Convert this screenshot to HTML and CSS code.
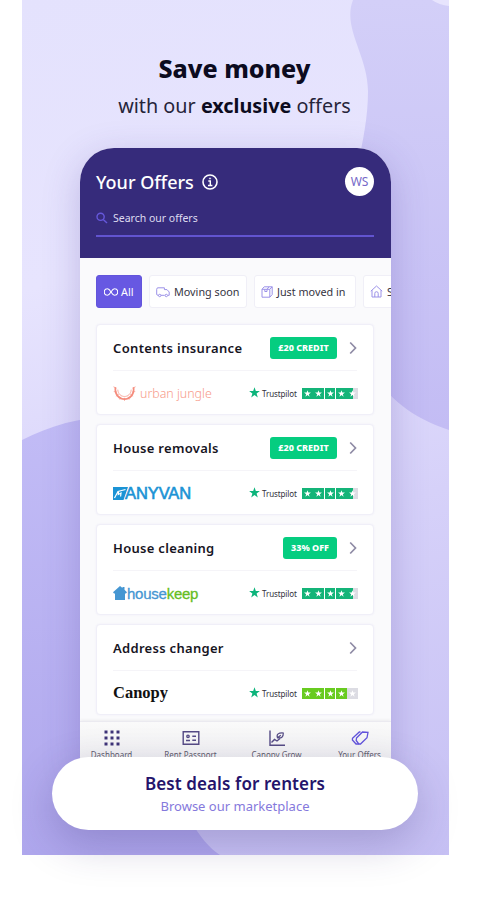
FILE: index.html
```html
<!DOCTYPE html>
<html lang="en">
  <head>
    <meta charset="UTF-8" />
    <meta name="viewport" content="width=device-width, initial-scale=1.0" />
    <title>Your Offers</title>
    <link rel="stylesheet" href="styles.css">
  </head>
  <body>
    <svg class="sprite" width="0" height="0">
      <symbol id="star" viewBox="0 0 10 10">
        <path d="M5 .2 6.2 3.7H9.9L6.9 5.9 8 9.5 5 7.3 2 9.5 3.1 5.9.1 3.7H3.8Z" />
      </symbol>
      <symbol id="arrow" viewBox="0 0 8 14">
        <path d="M1.2 1.5 6.5 7 1.2 12.5" fill="none" stroke="#8f8ba5" stroke-width="1.7" />
      </symbol>
    </svg>

    <div class="poster">
      <svg class="backdrop" viewBox="0 0 427 855">
        <defs>
          <linearGradient id="lilac" x1="0" y1="0" x2="0" y2="1">
            <stop offset="0" stop-color="#d3cff8" />
            <stop offset="1" stop-color="#c3bcf4" />
          </linearGradient>
          <linearGradient id="violet" x1="0" y1="0" x2="0" y2="1">
            <stop offset="0" stop-color="#c2bcf6" />
            <stop offset="1" stop-color="#afa7ed" />
          </linearGradient>
        </defs>
        <path d="M331 0C320 28 346 55 346 91C346 145 325 185 326 250C328 350 352 405 427 430V0Z" fill="url(#lilac)" />
        <path d="M410 0Q417 5 427 6V0Z" fill="#e7e4fd" />
        <path d="M0 440C70 404 170 400 190 500C210 610 140 680 150 760C155 806 178 842 198 855H0Z" fill="url(#violet)" />
      </svg>

      <div class="heading">
        <h1>Save money</h1>
        <p>with our <b>exclusive</b> offers</p>
      </div>

      <div class="phone">
        <div class="header">
          <div class="title-row">
            <h2>Your Offers</h2>
            <svg class="info" viewBox="0 0 16 16" fill="none" stroke="#fff">
              <circle cx="8" cy="8" r="7" stroke-width="1.6" />
              <path d="M6.3 7H8.3V11.5M6 11.5H10.4" stroke-width="1.4" />
              <circle cx="8" cy="4.5" r=".6" />
            </svg>
            <span class="avatar">WS</span>
          </div>
          <div class="search">
            <svg viewBox="0 0 12 12" width="12" height="12" fill="none" stroke="#6658dc" stroke-width="1.4">
              <circle cx="4.6" cy="4.8" r="3.6" />
              <path d="M7.2 7.4 11 11" />
            </svg>
            <span>Search our offers</span>
          </div>
        </div>

        <div class="chips">
          <div class="chip active">
            <svg viewBox="0 0 14 8" width="14" height="8" fill="none" stroke="#fff" stroke-width="1.1">
              <path d="M7 4C5.5 1.6 4.6.8 3.5.8a3 3 0 0 0 0 6.4C4.8 7.2 5.8 5.9 7 4S9.2.8 10.5.8a3 3 0 0 1 0 6.4C9.4 7.2 8.5 6.4 7 4Z" />
            </svg>
            <span>All</span>
          </div>
          <div class="chip soon">
            <svg viewBox="0 0 14 12" width="14" height="12" fill="none" stroke="#9c92e8">
              <path d="M2.5 9.3H1.8Q.7 9.3.7 8V3.3Q.7 1.8 2 1.8H8.4V3.6H11L13.2 6V9.3H12M5 9.3H8.6" />
              <circle cx="3.7" cy="9.5" r="1.2" />
              <circle cx="10.3" cy="9.5" r="1.2" />
            </svg>
            <span>Moving soon</span>
          </div>
          <div class="chip moved">
            <svg viewBox="0 0 12 12" width="12" height="12" fill="none" stroke="#9c92e8">
              <path d="M1 3.3H8.8V11.2H1ZM1 3.3 3.2 .8H11.2L8.8 3.3M11.2 .8V8.5L8.8 11.2M3.8 3.3V5.5H6V3.3L8 .8" />
            </svg>
            <span>Just moved in</span>
          </div>
          <div class="chip settled">
            <svg viewBox="0 0 13 13" width="13" height="13" fill="none" stroke="#9c92e8">
              <path d="M.8 6.2 6.5 1 12.2 6.2M2 5.2V12H11V5.2M4.8 12V8.4A1.7 1.7 0 0 1 8.2 8.4V12" />
            </svg>
            <span>S</span>
          </div>
        </div>

        <div class="offers">
          <div class="card">
            <div class="card-top">
              <h3 class="contents">Contents insurance</h3>
              <span class="badge">£20 CREDIT</span>
              <svg class="arrow"><use href="#arrow" /></svg>
            </div>
            <div class="card-bottom">
              <div class="brand jungle">
                <svg viewBox="0 0 24 18" width="23" height="18" fill="none" stroke="#f58c7d">
                  <path d="M2.5 3C1 19.5 23 19.5 21.5 3" stroke-width="1.8" />
                  <path d="M5 5.5C5.5 15 18.5 15 19 5.5" stroke-width=".7" />
                  <path d="M.5 2.5 3.5 4M.8 7.5 4 8M3 12.3 6 10.5M7 15.8 8.5 13M12 17.2V14M17 15.8 15.5 13M21 12.3 18 10.5M23.2 7.5 20 8M23.5 2.5 20.5 4" stroke-width=".7" />
                </svg>
                <span>urban jungle</span>
              </div>
              <div class="trust">
                <svg class="logo-star"><use href="#star" /></svg>
                <span>Trustpilot</span>
                <div class="stars">
                  <i><svg><use href="#star" /></svg></i>
                  <i><svg><use href="#star" /></svg></i>
                  <i><svg><use href="#star" /></svg></i>
                  <i><svg><use href="#star" /></svg></i>
                  <i class="half"><svg><use href="#star" /></svg></i>
                </div>
              </div>
            </div>
          </div>

          <div class="card">
            <div class="card-top">
              <h3>House removals</h3>
              <span class="badge">£20 CREDIT</span>
              <svg class="arrow"><use href="#arrow" /></svg>
            </div>
            <div class="card-bottom">
              <div class="brand anyvan">
                <svg viewBox="0 0 15 13" width="15" height="13">
                  <path d="M0 0H15L10.5 13H0Z" fill="#1b93d5" />
                  <path d="M1.5 11 5 4.5 12.5 2.5M5.5 4.5 5.3 7.5 8 6 7.6 9.5" fill="none" stroke="#fff" stroke-width="1.2" />
                </svg>
                <span>ANYVAN</span>
              </div>
              <div class="trust">
                <svg class="logo-star"><use href="#star" /></svg>
                <span>Trustpilot</span>
                <div class="stars">
                  <i><svg><use href="#star" /></svg></i>
                  <i><svg><use href="#star" /></svg></i>
                  <i><svg><use href="#star" /></svg></i>
                  <i><svg><use href="#star" /></svg></i>
                  <i class="half"><svg><use href="#star" /></svg></i>
                </div>
              </div>
            </div>
          </div>

          <div class="card">
            <div class="card-top">
              <h3>House cleaning</h3>
              <span class="badge off">33% OFF</span>
              <svg class="arrow"><use href="#arrow" /></svg>
            </div>
            <div class="card-bottom">
              <div class="brand housekeep">
                <svg viewBox="0 0 14 14" width="14" height="14" fill="#4596d2">
                  <path d="M7 0 9.5 2V1H11.5V3.8L14 6.2 13 7.5H12V14H2V7.5H1L0 6.2Z" />
                </svg>
                <span>house<em>keep</em></span>
              </div>
              <div class="trust">
                <svg class="logo-star"><use href="#star" /></svg>
                <span>Trustpilot</span>
                <div class="stars">
                  <i><svg><use href="#star" /></svg></i>
                  <i><svg><use href="#star" /></svg></i>
                  <i><svg><use href="#star" /></svg></i>
                  <i><svg><use href="#star" /></svg></i>
                  <i class="half"><svg><use href="#star" /></svg></i>
                </div>
              </div>
            </div>
          </div>

          <div class="card">
            <div class="card-top">
              <h3>Address changer</h3>
              <svg class="arrow"><use href="#arrow" /></svg>
            </div>
            <div class="card-bottom">
              <div class="brand canopy"><span>Canopy</span></div>
              <div class="trust four">
                <svg class="logo-star"><use href="#star" /></svg>
                <span>Trustpilot</span>
                <div class="stars">
                  <i><svg><use href="#star" /></svg></i>
                  <i><svg><use href="#star" /></svg></i>
                  <i><svg><use href="#star" /></svg></i>
                  <i><svg><use href="#star" /></svg></i>
                  <i class="empty"><svg><use href="#star" /></svg></i>
                </div>
              </div>
            </div>
          </div>
        </div>

        <div class="tabs">
          <div class="tab">
            <svg viewBox="0 0 18 18" width="18" height="18" fill="#3e3478">
              <path d="M1.5 1.5h3v3h-3ZM7.5 1.5h3v3h-3ZM13.5 1.5h3v3h-3ZM1.5 7.5h3v3h-3ZM7.5 7.5h3v3h-3ZM13.5 7.5h3v3h-3ZM1.5 13.5h3v3h-3ZM7.5 13.5h3v3h-3ZM13.5 13.5h3v3h-3Z" />
            </svg>
            <span>Dashboard</span>
          </div>
          <div class="tab passport">
            <svg viewBox="0 0 18 18" width="18" height="18" fill="none" stroke="#554b85" stroke-width="1.4">
              <path d="M1.2 2.7H16.8V15.3H1.2Z" />
              <path d="M4 11.5H8M10.3 7.2H14M10.3 11.2H14" />
              <circle cx="6" cy="7.3" r="1.2" />
            </svg>
            <span>Rent Passport</span>
          </div>
          <div class="tab grow">
            <svg viewBox="0 0 18 18" width="18" height="18" fill="none" stroke="#554b85" stroke-width="1.4">
              <path d="M2 1.5V16.3H17M3.5 13.5 6.5 10.5 9 12 12 9.5" />
              <path d="M9.5 8.8C8.2 5 10.5 3.7 15.3 4C15.5 8 13.3 9.5 9.5 8.8ZM9.5 8.8 12.8 6.2" stroke-width="1.2" />
            </svg>
            <span>Canopy Grow</span>
          </div>
          <div class="tab current">
            <svg viewBox="0 0 18 18" width="18" height="18" fill="none" stroke="#6254dc" stroke-width="1.3">
              <path d="M5.5 9 11.5 3 17 3.3 16 8.8 9.5 15 7.8 15 5.2 11.5Z" />
              <path d="M9.5 3H8.3L1.5 9.3 1.4 11 5 15H7.8" />
            </svg>
            <span>Your Offers</span>
          </div>
        </div>
      </div>

      <div class="cta">
        <strong>Best deals for renters</strong>
        <span>Browse our marketplace</span>
      </div>
    </div>
  </body>
</html>
```

FILE: styles.css
```css
* {
  box-sizing: border-box;
}
body {
  margin: 0;
  height: 900px;
  overflow: hidden;
  background-color: white;
  font-family: "Noto Sans", sans-serif;
}
h1, h2, h3, p {
  margin: 0;
}
svg {
  display: block;
  flex-shrink: 0;
}
.sprite {
  position: absolute;
}
.poster {
  position: relative;
  display: flex;
  flex-direction: column;
  width: 427px;
  height: 855px;
  margin-left: 22px;
  background: linear-gradient(165deg, #e4e2fd 0%, #e7e4fe 30%, #d6d1f9 62%, #c6c0f4 100%);
}
.backdrop {
  position: absolute;
  top: 0;
  left: 0;
  width: 427px;
  height: 855px;
}

.heading {
  position: relative;
  height: 148px;
  padding: 50px 2px 0 0;
  text-align: center;
  color: #0c0b20;
}
.heading h1 {
  font-size: 25px;
  line-height: 36px;
  font-weight: 800;
  white-space: nowrap;
}
.heading p {
  margin-top: 6px;
  font-size: 19.8px;
  line-height: 28px;
  color: #26243a;
  white-space: nowrap;
}
.heading b {
  font-weight: 700;
  color: #0c0b20;
}

.phone {
  position: relative;
  width: 311px;
  height: 622px;
  margin-left: 58px;
  border-radius: 34px 34px 0 0;
  background-color: #fafafc;
  overflow: hidden;
  box-shadow: 0 10px 36px rgba(70, 55, 150, 0.25);
}
.header {
  height: 110px;
  padding: 18px 17px 0 16px;
  background-color: #362b7b;
  color: white;
}
.title-row {
  display: flex;
  align-items: center;
  height: 31px;
}
.title-row h2 {
  font-size: 18px;
  font-weight: 500;
  white-space: nowrap;
}
.info {
  width: 16px;
  height: 16px;
  margin-left: 8px;
}
.avatar {
  width: 29px;
  height: 29px;
  margin-left: auto;
  border-radius: 50%;
  background-color: white;
  color: #7568c8;
  font-size: 12px;
  line-height: 30px;
  text-align: center;
}
.search {
  display: flex;
  align-items: center;
  gap: 5px;
  height: 40px;
  padding-top: 3px;
  border-bottom: 2px solid #6254d0;
  font-size: 10.5px;
  color: #dedbf0;
}

.chips {
  display: flex;
  gap: 7px;
  padding: 17px 0 0 16px;
}
.chip {
  display: flex;
  align-items: center;
  flex-shrink: 0;
  gap: 4px;
  height: 33px;
  padding-left: 6px;
  border: 1px solid #f0eff7;
  border-radius: 3px;
  background-color: white;
  color: #36343f;
  font-size: 10.8px;
  white-space: nowrap;
}
.chip.active {
  width: 46px;
  gap: 3px;
  padding-left: 7px;
  border-color: #6254dc;
  background-color: #6758e2;
  color: white;
}
.soon {
  width: 98px;
}
.moved {
  width: 102px;
}
.settled {
  width: 90px;
}

.offers {
  display: flex;
  flex-direction: column;
  gap: 9px;
  padding: 16px 17px 0 16px;
}
.card {
  height: 91px;
  padding: 0 16px;
  border: 1px solid #f0eff8;
  border-radius: 4px;
  background-color: white;
  box-shadow: 0 0 2px rgba(100, 85, 200, 0.08);
}
.card-top {
  display: flex;
  align-items: center;
  height: 46px;
  border-bottom: 1px solid #f5f4f8;
}
.card-top h3 {
  margin-right: auto;
  color: #17151f;
  font-size: 13px;
  font-weight: 600;
  letter-spacing: 0.3px;
  white-space: nowrap;
}
.card-top .contents {
  letter-spacing: 0.36px;
}
.badge {
  width: 67px;
  height: 22px;
  margin-right: 12px;
  border-radius: 3px;
  background-color: #05cd80;
  color: white;
  font-size: 9px;
  font-weight: 800;
  line-height: 22px;
  text-align: center;
}
.badge.off {
  width: 54px;
}
.arrow {
  width: 8px;
  height: 14px;
}
.card-bottom {
  display: flex;
  align-items: center;
  justify-content: space-between;
  height: 44px;
}
.brand {
  display: flex;
  align-items: center;
  white-space: nowrap;
}
.jungle {
  gap: 4px;
  color: #f79a8a;
  font-size: 12.4px;
  font-weight: 300;
}
.anyvan {
  color: #1b93d5;
  font-family: "Liberation Sans", sans-serif;
  font-size: 16.5px;
  -webkit-text-stroke: 0.6px #1b93d5;
}
.anyvan span {
  margin-left: -3px;
  letter-spacing: -0.1px;
}
.housekeep {
  color: #4596d2;
  font-family: "Liberation Sans", sans-serif;
  font-size: 15px;
  letter-spacing: -0.25px;
  -webkit-text-stroke: 0.3px;
}
.housekeep em {
  font-style: normal;
  color: #65bd22;
}
.canopy {
  color: #111;
  font-family: "Liberation Serif", serif;
  font-size: 16.5px;
  font-weight: 700;
}
.trust {
  display: flex;
  align-items: center;
  width: 109px;
  margin-right: -1px;
  color: #33313a;
  font-size: 8px;
  letter-spacing: -0.1px;
}
.logo-star {
  width: 11px;
  height: 11px;
  margin: -1px 2px 0 0;
  fill: #0bb47b;
}
.stars {
  display: flex;
  gap: 0.5px;
  margin-left: auto;
}
.stars i {
  display: grid;
  place-items: center;
  width: 10.8px;
  height: 11px;
  background-color: #14b478;
}
.stars svg {
  width: 7px;
  height: 7px;
  fill: white;
}
.stars .half {
  background: linear-gradient(90deg, #14b478 50%, #dcdce3 50%);
}
.four .stars i {
  background-color: #68cb20;
}
.four .stars .empty {
  background-color: #dcdce3;
}

.tabs {
  position: absolute;
  left: 0;
  bottom: 0;
  display: flex;
  width: 311px;
  height: 49px;
  padding-top: 7px;
  border-top: 1px solid #ebeaf0;
  background: linear-gradient(#fafafa, #eeeef0);
  box-shadow: 0 -1px 3px rgba(0, 0, 0, 0.06);
}
.tab {
  display: flex;
  flex-direction: column;
  align-items: center;
  gap: 2px;
  width: 63px;
  color: #5e5b6c;
  font-size: 8px;
  line-height: 11px;
  white-space: nowrap;
}
.passport {
  margin-left: 16px;
}
.grow {
  margin-left: 23px;
}
.current {
  margin-left: 20px;
}

.cta {
  position: absolute;
  top: 757px;
  left: 30px;
  display: flex;
  flex-direction: column;
  align-items: center;
  width: 366px;
  height: 73px;
  padding-top: 15px;
  border-radius: 37px;
  background-color: white;
  box-shadow: 0 14px 42px rgba(50, 40, 110, 0.25);
  white-space: nowrap;
}
.cta strong {
  color: #24146b;
  font-size: 17px;
  line-height: 24px;
  font-weight: 600;
  letter-spacing: 0.1px;
}
.cta span {
  color: #8579dc;
  font-size: 13px;
  line-height: 20px;
}
```
